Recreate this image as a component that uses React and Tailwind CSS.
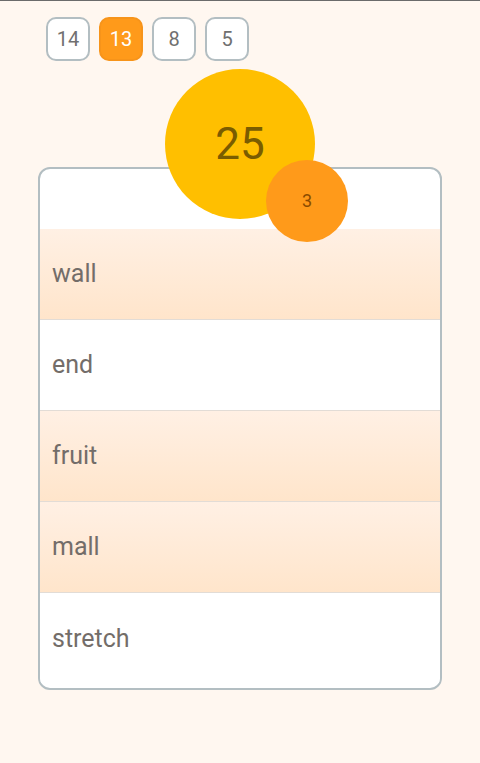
import React from 'react';

const chips = [
  { n: 14, active: false },
  { n: 13, active: true },
  { n: 8, active: false },
  { n: 5, active: false },
];

const rows = [
  { word: 'wall', hot: true },
  { word: 'end', hot: false },
  { word: 'fruit', hot: true },
  { word: 'mall', hot: true },
  { word: 'stretch', hot: false },
];

export default function App() {
  return (
    <div
      className="min-h-[763px] w-[480px] bg-[#fff7f0] border-t border-[#6b6b6b]"
      style={{ fontFamily: 'Roboto, "Liberation Sans", sans-serif' }}
    >
      {/* chips */}
      <div className="flex gap-[9px] pl-[46px] pt-[16px]">
        {chips.map((c) => (
          <div
            key={c.n}
            className={
              c.active
                ? 'w-[44px] h-[44px] rounded-[10px] bg-[#ff9a1a] border-2 border-[#f7941a] flex items-center justify-center text-[20px] text-white'
                : 'w-[44px] h-[44px] rounded-[10px] bg-white border-2 border-[#b3bec2] flex items-center justify-center text-[20px] text-[#707070]'
            }
          >
            {c.n}
          </div>
        ))}
      </div>

      {/* score bubble */}
      <div className="flex justify-center mt-[8px]">
        <div className="relative z-10 w-[150px] h-[150px] rounded-full bg-[#ffbf00] flex items-center justify-center">
          <span className="text-[44px] text-[#7a5c00] leading-none">25</span>
          <div className="absolute left-[101px] top-[91px] w-[82px] h-[82px] rounded-full bg-[#ff9a1a] flex items-center justify-center">
            <span className="text-[18px] text-[#8a4b00] leading-none">3</span>
          </div>
        </div>
      </div>

      {/* word list */}
      <div className="mx-[38px] -mt-[52px] bg-white border-2 border-[#b3bec2] rounded-[12px] overflow-hidden pb-[4px]">
        <div className="h-[60px]" />
        {rows.map((r, i) => (
          <div
            key={r.word}
            className={
              (r.hot ? 'bg-gradient-to-b from-[#fff0e4] to-[#ffe5cb] ' : 'bg-white ') +
              (i < rows.length - 1 ? 'border-b border-[#e2dcd6] ' : '') +
              'h-[91px] flex items-center pl-[12px] text-[25px] text-[#736d69]'
            }
          >
            {r.word}
          </div>
        ))}
      </div>
    </div>
  );
}
